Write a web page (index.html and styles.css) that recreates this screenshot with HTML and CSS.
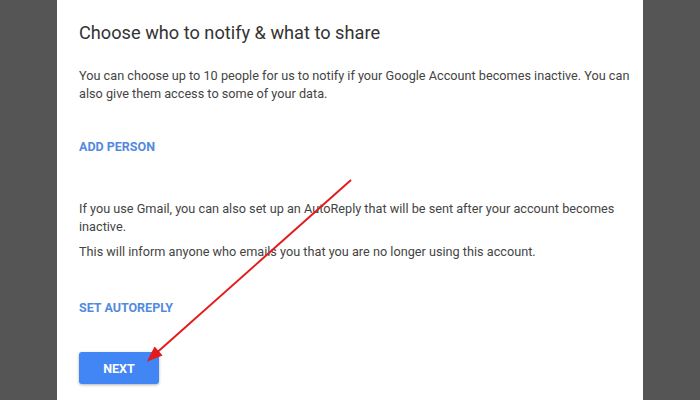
FILE: index.html
```html
<!DOCTYPE html>
<html>
<head>
<meta charset="utf-8">
<link rel="stylesheet" href="styles.css">
</head>
<body>
<div class="panel">
  <h1 class="title">Choose who to notify &amp; what to share</h1>
  <p class="text intro">You can choose up to 10 people for us to notify if your Google Account becomes inactive. You can also give them access to some of your data.</p>
  <a class="link add">ADD PERSON</a>
  <p class="text gmail">If you use Gmail, you can also set up an AutoReply that will be sent after your account becomes inactive.</p>
  <p class="text inform">This will inform anyone who emails you that you are no longer using this account.</p>
  <a class="link auto">SET AUTOREPLY</a>
  <div class="actions"><button class="next">NEXT</button></div>
</div>
<svg class="arrow" width="700" height="400" viewBox="0 0 700 400">
  <line x1="351" y1="180" x2="157" y2="352.5" stroke="#e41b1b" stroke-width="2"/>
  <polygon points="146.7,361.7 162.6,355.6 154.6,346.6" fill="#e41b1b"/>
</svg>
</body>
</html>
```
FILE: styles.css
```css
html, body {
  margin: 0;
  padding: 0;
}
body {
  width: 700px;
  height: 400px;
  background: #555555;
  overflow: hidden;
  position: relative;
  font-family: Roboto, "Liberation Sans", Arial, sans-serif;
}
.panel {
  margin-left: 57px;
  width: 586px;
  height: 400px;
  background: #ffffff;
  box-sizing: border-box;
  padding: 21px 0 0 22px;
}
.title {
  margin: 0;
  font-size: 18.2px;
  line-height: 24px;
  font-weight: 400;
  color: #333333;
}
.text {
  margin: 0;
  font-size: 12.7px;
  line-height: 18px;
  color: #444444;
  width: 560px;
}
.intro {
  margin-top: 22px;
}
.link {
  display: block;
  font-size: 12.5px;
  line-height: 20px;
  font-weight: 700;
  color: #528ae0;
  text-decoration: none;
}
.add {
  margin-top: 34px;
}
.gmail {
  margin-top: 43px;
}
.inform {
  margin-top: 7px;
}
.auto {
  margin-top: 37px;
}
.actions {
  margin-top: 34px;
}
.next {
  width: 80px;
  height: 32px;
  border: none;
  border-radius: 3px;
  background: #4285f4;
  color: #ffffff;
  font-family: Roboto, "Liberation Sans", Arial, sans-serif;
  font-size: 12.5px;
  font-weight: 700;
  box-shadow: 0 1px 3px rgba(0,0,0,0.3);
  padding: 0;
}
.arrow {
  position: absolute;
  left: 0;
  top: 0;
}
```
